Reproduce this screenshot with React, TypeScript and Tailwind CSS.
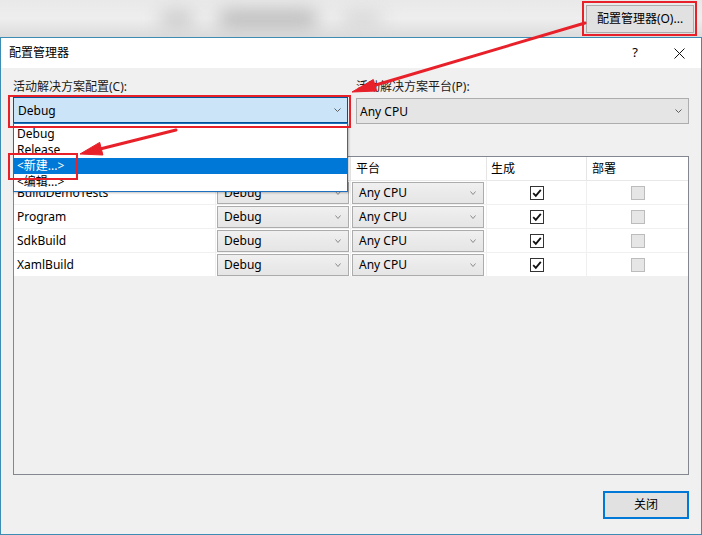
import React from "react";

const Chevron = ({ w = 7, h = 4, c = "#5f5f5f" }: { w?: number; h?: number; c?: string }) => (
  <svg width={w} height={h} viewBox={`0 0 ${w} ${h}`}>
    <path d={`M0.5 0.5 L${w / 2} ${h - 0.5} L${w - 0.5} 0.5`} fill="none" stroke={c} strokeWidth="1" />
  </svg>
);

const SmallCombo = ({ text }: { text: string }) => (
  <div className="h-[22px] w-[132px] border border-[#acacac] bg-gradient-to-b from-[#f0f0f0] to-[#e5e5e5] flex items-center justify-between pl-[6px] pr-[7px] text-[12px] text-[#000]">
    <span>{text}</span>
    <Chevron w={6} h={4} c="#8a8a8a" />
  </div>
);

const CheckOn = () => (
  <div className="w-[14px] h-[14px] border border-[#333] bg-white flex items-center justify-center">
    <svg width="12" height="12" viewBox="0 0 12 12">
      <path d="M2.2 6.2 L4.8 8.8 L9.8 2.8" fill="none" stroke="#111" strokeWidth="1.8" />
    </svg>
  </div>
);

const CheckOff = () => <div className="w-[14px] h-[14px] border border-[#bcbcbc] bg-[#e6e6e6]" />;

const rows = ["BuildDemoTests", "Program", "SdkBuild", "XamlBuild"];

export default function App() {
  return (
    <div className="relative w-[702px] h-[535px] overflow-hidden bg-[#f0f0f0] font-['Noto_Sans','Noto_Sans_CJK_SC',sans-serif] text-[12px] text-black">
      {/* blurred background strip */}
      <div className="relative h-[37px] bg-gradient-to-b from-[#e9e9e9] via-[#eeeeee] to-[#dcdcdc] flex items-center overflow-hidden">
        <div className="flex items-center gap-[24px] pl-[160px] blur-[9px]">
          <div className="w-[34px] h-[14px] rounded-full bg-[#c2c2c2]" />
          <div className="w-[100px] h-[16px] rounded-full bg-[#b4b4b4]" />
          <div className="w-[40px] h-[12px] rounded-full bg-[#cfcfcf]" />
        </div>
        <div className="ml-auto mr-[8px] h-[28px] w-[108px] border border-[#adadad] bg-[#e1e1e1] flex items-center justify-center text-[12px]">
          配置管理器(O)...
        </div>
      </div>

      {/* dialog */}
      <div className="h-[498px] border border-[#3c8cb4] flex flex-col">
        <div className="h-[31px] bg-white flex items-center pl-[8px] pr-[16px]">
          <span>配置管理器</span>
          <span className="ml-auto mr-[36px] text-[13px]">?</span>
          <svg width="11" height="11" viewBox="0 0 11 11">
            <path d="M0.5 0.5 L10.5 10.5 M10.5 0.5 L0.5 10.5" stroke="#111" strokeWidth="1" />
          </svg>
        </div>

        <div className="flex-1 bg-[#f0f0f0] px-[12px] pt-[9px] pb-[15px] flex flex-col">
          <div className="grid grid-cols-[335px_1fr] gap-x-[8px]">
            <div className="flex flex-col gap-[4px]">
              <div className="h-[16px] leading-[20px] text-[#1a1a1a]">活动解决方案配置(C):</div>
              <div className="relative z-10">
                <div className="h-[26px] border border-[#005499] bg-[#cce4f7] flex items-center justify-between pl-[4px] pr-[6px]">
                  <span className="pt-[2px]">Debug</span>
                  <Chevron />
                </div>
                <div className="absolute left-0 right-0 top-full border border-[#1f6fbf] bg-white pt-[2px] pb-[1px] shadow-[1px_1px_2px_rgba(0,0,0,0.25)]">
                  <div className="h-[16px] leading-[16px] pl-[3px]">Debug</div>
                  <div className="h-[16px] leading-[16px] pl-[3px]">Release</div>
                  <div className="h-[16px] leading-[16px] pl-[3px] bg-[#0078d7] text-white">&lt;新建...&gt;</div>
                  <div className="h-[16px] leading-[16px] pl-[3px]">&lt;编辑...&gt;</div>
                </div>
              </div>
            </div>
            <div className="flex flex-col gap-[4px]">
              <div className="h-[16px] leading-[20px] text-[#1a1a1a]">活动解决方案平台(P):</div>
              <div className="h-[26px] mt-[1px] border border-[#adadad] bg-[#e5e5e5] flex items-center justify-between pl-[3px] pr-[6px]">
                <span className="pt-[2px]">Any CPU</span>
                <Chevron />
              </div>
            </div>
          </div>

          {/* table */}
          <div className="mt-[32px] h-[319px] border border-[#828790] bg-[#f0f0f0]">
            <div className="grid grid-cols-[202px_135px_136px_100px_101px] h-[24px] bg-white border-b border-[#e8e8e8]">
              <div className="border-r border-[#e5e5e5] pl-[4px] flex items-center">项目</div>
              <div className="border-r border-[#e5e5e5] pl-[5px] flex items-center">配置</div>
              <div className="border-r border-[#e5e5e5] pl-[5px] flex items-center">平台</div>
              <div className="border-r border-[#e5e5e5] pl-[4px] flex items-center">生成</div>
              <div className="pl-[5px] flex items-center">部署</div>
            </div>
            {rows.map((r) => (
              <div key={r} className="grid grid-cols-[202px_135px_136px_100px_101px] h-[24px] bg-white border-b border-[#f0f0f0]">
                <div className="border-r border-[#f0f0f0] pl-[3px] flex items-center">{r}</div>
                <div className="border-r border-[#f0f0f0] pl-[1px] flex items-center">
                  <SmallCombo text="Debug" />
                </div>
                <div className="border-r border-[#f0f0f0] pl-[1px] flex items-center">
                  <SmallCombo text="Any CPU" />
                </div>
                <div className="border-r border-[#f0f0f0] flex items-center justify-center">
                  <CheckOn />
                </div>
                <div className="flex items-center justify-center">
                  <CheckOff />
                </div>
              </div>
            ))}
          </div>

          <div className="mt-[16px] flex justify-end">
            <div className="h-[28px] w-[86px] border-2 border-[#0078d7] bg-[#e1e1e1] flex items-center justify-center">
              关闭
            </div>
          </div>
        </div>
      </div>

      {/* annotation overlay */}
      <svg className="absolute inset-0 pointer-events-none z-20" width="702" height="535" viewBox="0 0 702 535">
        <g fill="none" stroke="#e8202a" strokeWidth="2">
          <rect x="583" y="2" width="113" height="33" />
          <rect x="9" y="96" width="341" height="31" />
          <rect x="9" y="154" width="68" height="25" />
        </g>
        <g fill="#e8202a" stroke="#e8202a">
          <line x1="585" y1="23" x2="374" y2="85.5" strokeWidth="3" strokeLinecap="round" />
          <polygon points="352,92 376.7,91 373.3,79.5" strokeWidth="1" />
          <line x1="176" y1="130" x2="100" y2="149" strokeWidth="3" strokeLinecap="round" />
          <polygon points="80,154 102.9,155 99.7,142.4" strokeWidth="1" />
        </g>
      </svg>
    </div>
  );
}
